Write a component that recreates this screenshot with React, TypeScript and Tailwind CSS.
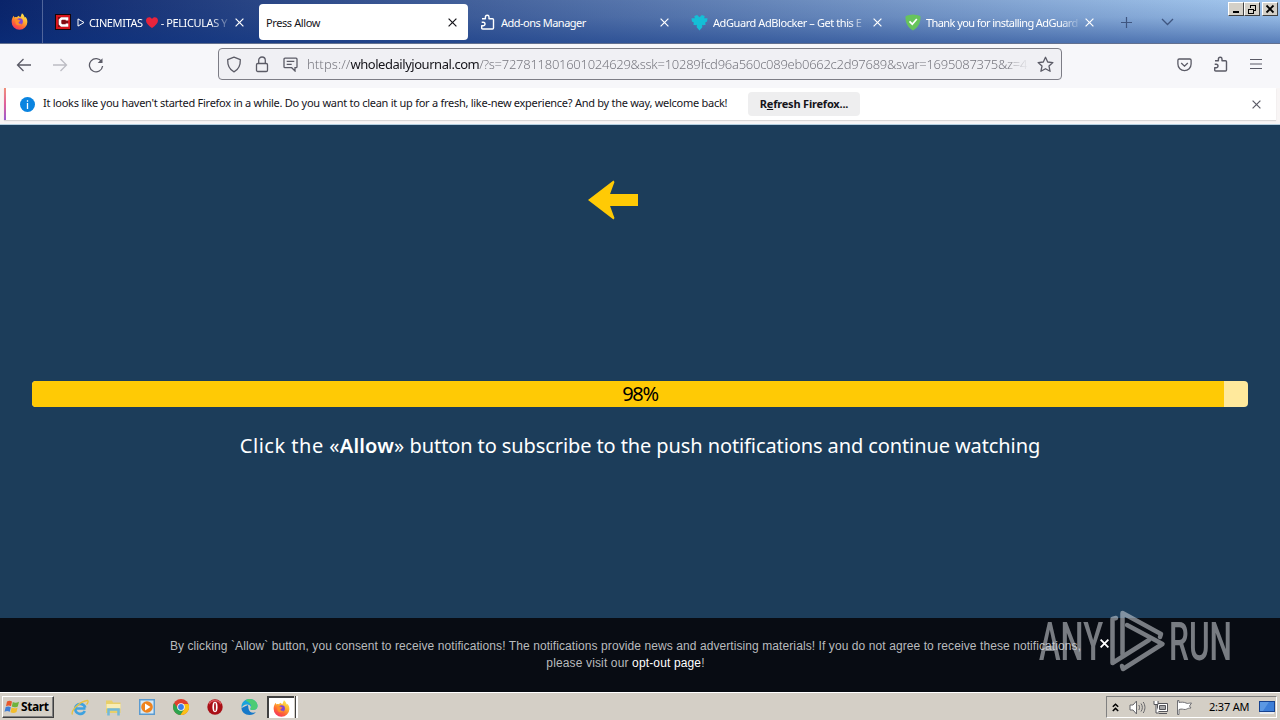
import type { ReactNode } from "react";

const uiFont = "font-['Noto_Sans','Open_Sans',sans-serif]";

function FirefoxIcon({ size }: { size: number }) {
  return (
    <svg width={size} height={size} viewBox="0 0 16 16">
      <defs>
        <linearGradient id="fox" x1=".8" y1=".1" x2=".3" y2="1">
          <stop offset="0" stopColor="#ffe14d" />
          <stop offset=".35" stopColor="#ffb02e" />
          <stop offset=".65" stopColor="#ff6a33" />
          <stop offset="1" stopColor="#f5325f" />
        </linearGradient>
      </defs>
      <path d="M8 15.800A7.400 7.400 0 0 1 .6 8.400C.6 6 1.300 4 2.600 2.600L3.200 4.200C4 3.700 5 3.800 5.600 4.100L6.800 2.600 8.800 4 10.300.2C12 1.500 12.600 3 12.900 4.200L13.800 3.700C15 5.200 15.500 7 15.400 8.600A7.400 7.400 0 0 1 8 15.800Z" fill="url(#fox)" />
      <circle cx="8.200" cy="8" r="3" fill="#7f45d6" />
      <path d="M4.400 6.200C5.500 5.400 7 5.800 7.600 6.700L9 7C8.600 8 7.600 7.800 7.200 8.600 6.900 9.800 8.400 10.500 10 10 8.500 12.200 5.500 11.800 4.500 10 3.800 8.700 3.900 7 4.400 6.200Z" fill="#ff8b2a" />
    </svg>
  );
}

function PuzzleIcon() {
  return (
    <svg width="16" height="16" viewBox="0 0 16 16" fill="none" stroke="currentColor" strokeWidth="1.400" strokeLinejoin="round">
      <path d="M2 4.700H5.400V3A1.800 1.800 0 0 1 9 3V4.700H12.500Q13.500 4.700 13.500 5.700V14Q13.500 15 12.500 15H2.700Q1.700 15 1.700 14V11.800H3.200A1.800 1.800 0 0 0 3.200 8.200H1.700" />
    </svg>
  );
}

function CloseIcon({ size = 9 }: { size?: number }) {
  return (
    <svg width={size} height={size} viewBox="0 0 9 9" stroke="currentColor" strokeWidth="1.200" className="shrink-0">
      <path d="M.6.6 8.400 8.400M8.400.6.6 8.400" />
    </svg>
  );
}

function CinemitasIcon() {
  return (
    <svg width="16" height="16" viewBox="0 0 16 16">
      <path fill="#160508" d="M0 0h16v16H0z" />
      <path fill="#d7151d" d="M1 1h14v14H1z" />
      <path fill="#160508" d="M3 3h10v10H3z" opacity=".45" />
      <path d="M12 6.500V4.500H6.500L5 6v4l1.500 1.500H12v-2" fill="none" stroke="#fff" strokeWidth="2.600" />
    </svg>
  );
}

function AdGuardFlower() {
  return (
    <svg width="18" height="17" viewBox="0 0 18 17" fill="#14bfd6">
      <path d="M3.500 1.500 6.500.5 9 3 11.500.5 14.500 1.500 14 4 17.500 4 17 7.500 15 8.500 15.500 11 13 11.500 11.800 11 12 13.500 9 17 6 13.500 6.200 11 5 11.500 2.500 11 3 8.500 1 7.500.5 4 4 4Z" />
    </svg>
  );
}

function GreenShield() {
  return (
    <svg width="16" height="17" viewBox="0 0 16 17">
      <path fill="#67c45c" d="M8 .5C10 .8 13.500 1.200 15.500 2.200 15.800 9 13 13.500 8 16.500 3 13.500.200 9 .5 2.200 2.500 1.200 6 .8 8 .5Z" />
      <path d="M4.500 7.300 7.300 10.200 11.800 5" fill="none" stroke="#fff" strokeWidth="1.700" />
    </svg>
  );
}

type TabProps = {
  icon?: ReactNode;
  title: ReactNode;
  active?: boolean;
  className: string;
  textClass: string;
};

function Tab({ icon, title, active, className, textClass }: TabProps) {
  return (
    <div className={"flex h-9 shrink-0 items-center rounded-[4px] " + className + (active ? " bg-white text-[#15141a]" : " text-white")}>
      {icon && <span className="mr-[5px] flex w-[17px] shrink-0 justify-center">{icon}</span>}
      <span className={"flex-1 overflow-hidden whitespace-nowrap pt-px text-[11px] leading-4 " + textClass}>{title}</span>
      <CloseIcon />
    </div>
  );
}

const fade = "mr-[3px] [mask-image:linear-gradient(to_right,black_86%,transparent)]";

function TabStrip() {
  return (
    <div className="flex h-11 shrink-0 items-start border-b border-[#62708f] bg-[linear-gradient(to_bottom,rgba(10,50,130,0)_0%,rgba(10,50,130,0.12)_40%,rgba(10,50,130,0.5)_100%),linear-gradient(to_right,#0a246a,#a6caf0)]">
      <div className="flex h-[43px] w-[43px] shrink-0 items-center justify-center border-r border-[#50659b] pr-[3px]">
        <FirefoxIcon size={17} />
      </div>
      <div className="flex pt-1">
        <Tab
          className="w-[211px] pl-[11px] pr-[10px]"
          textClass={fade + " tracking-[-0.4px]"}
          icon={<CinemitasIcon />}
          title={
            <span className="flex items-center">
              <svg width="8" height="9" viewBox="0 0 8 9" fill="none" stroke="white" className="ml-px mr-[4px] shrink-0"><path d="M1 .9 7 4.500 1 8.100Z" /></svg>
              CINEMITAS
              <svg width="12" height="11" viewBox="0 0 12 11" fill="#e8243c" className="mx-[3px] shrink-0"><path d="M6 11C2.500 8.500 0 6.300 0 3.500 0 0 4.500-1 6 2 7.500-1 12 0 12 3.500 12 6.300 9.500 8.500 6 11Z" /></svg>
              - PELICULAS Y
            </span>
          }
        />
        <Tab active className="ml-[5px] w-[209px] pl-[7px] pr-[11px]" textClass="tracking-[-0.4px]" title="Press Allow" />
        <Tab className="ml-[4px] w-[208px] pl-[7px] pr-[11px]" textClass="tracking-[-0.5px]" icon={<PuzzleIcon />} title="Add-ons Manager" />
        <Tab className="ml-[4px] w-[209px] pl-[7px] pr-[11px]" textClass={fade + " tracking-[-0.42px]"} icon={<AdGuardFlower />} title="AdGuard AdBlocker – Get this E" />
        <Tab className="ml-[4px] w-[208px] pl-[7px] pr-[11px]" textClass={fade + " tracking-[-0.58px]"} icon={<GreenShield />} title="Thank you for installing AdGuard" />
      </div>
      <div className="flex h-[44px] flex-1 items-center text-[#3f5680]">
        <svg width="13" height="13" viewBox="0 0 13 13" stroke="currentColor" strokeWidth="1.200" className="ml-[15px]"><path d="M6.500 1v11M1 6.500h11" /></svg>
        <svg width="13" height="8" viewBox="0 0 13 8" fill="none" stroke="currentColor" strokeWidth="1.300" className="ml-[28px]"><path d="M1 1l5.500 5.500L12 1" /></svg>
      </div>
      <div className="flex shrink-0 pr-[2px] pt-[2px]">
        {["min", "restore", "close"].map((kind) => (
          <span
            key={kind}
            className={
              "flex h-[14px] w-4 items-center justify-center border border-b-[#404040] border-l-white border-r-[#404040] border-t-white bg-[#d4d0c8]" +
              (kind === "close" ? " ml-[2px]" : "")
            }
          >
            <svg width="10" height="10" viewBox="0 0 10 10" fill="none" stroke="black" shapeRendering={kind === "close" ? "auto" : "crispEdges"}>
              {kind === "min" && <path d="M2 8h6" strokeWidth="2" />}
              {kind === "restore" && <path d="M3 1h6M3.500 1v3M8.500 1v5.500H7M1 5h6M1.500 5v4.500h5V5" />}
              {kind === "close" && <path d="M1.500 1.500l7 7M8.500 1.500l-7 7" strokeWidth="1.800" />}
            </svg>
          </span>
        ))}
      </div>
    </div>
  );
}

function Toolbar() {
  return (
    <div className="flex h-11 shrink-0 items-center bg-[#f7f7fa] pb-1 text-[#5b5b66]">
      <svg width="16" height="14" viewBox="0 0 16 14" fill="none" stroke="currentColor" strokeWidth="1.300" className="ml-4 mt-px"><path d="M15 7H1.500M7.500 1l-6 6 6 6" /></svg>
      <svg width="16" height="14" viewBox="0 0 16 14" fill="none" stroke="#bdbdc4" strokeWidth="1.300" className="ml-5 mt-px"><path d="M1 7h13.500M8.500 1l6 6-6 6" /></svg>
      <svg width="16" height="16" viewBox="0 0 16 16" fill="none" stroke="currentColor" strokeWidth="1.300" className="ml-5 mt-px"><path d="M13.700 4.800A6.600 6.600 0 1 0 14.600 9" /><path d="M14.500 1.200V6H9.700Z" fill="currentColor" stroke="none" /></svg>
      <div className="ml-[114px] flex h-8 w-[844px] items-center rounded-[4px] border border-[#7d7d86] bg-[#f0f0f4]">
        <svg width="16" height="17" viewBox="0 0 16 17" fill="none" stroke="currentColor" strokeWidth="1.300" className="ml-[7px] shrink-0"><path d="M8 1.200 14.300 3.700C14.500 9 12.500 13.500 8 15.800 3.500 13.500 1.500 9 1.700 3.700Z" strokeLinejoin="round" /></svg>
        <svg width="14" height="17" viewBox="0 0 14 17" fill="none" stroke="currentColor" strokeWidth="1.300" className="ml-[13px] shrink-0"><rect x="1.500" y="7.500" width="11" height="8" rx="1.300" /><path d="M3.700 7.500V4.300a3.300 3.300 0 0 1 6.600 0v3.200" /></svg>
        <svg width="15" height="15" viewBox="0 0 15 15" fill="none" stroke="currentColor" strokeWidth="1.300" className="ml-[14px] shrink-0"><path d="M2 1.200h11a1 1 0 0 1 1 1v7.500a1 1 0 0 1-1 1h-1V14l-3.300-3.300H2a1 1 0 0 1-1-1V2.200a1 1 0 0 1 1-1ZM3.700 4.400h7.600M3.700 7.300h5" /></svg>
        <div className="ml-[9px] w-[722px] overflow-hidden whitespace-nowrap pt-0.5 text-[13px] font-light tracking-[-0.265px] text-[#77777f] [mask-image:linear-gradient(to_right,black_97%,transparent)]">
          <span className="tracking-[0.1px]">https://</span>
          <span className="font-normal tracking-[-0.46px] text-[#15141a]">wholedailyjournal.com</span>
          /?s=727811801601024629&amp;ssk=10289fcd96a560c089eb0662c2d97689&amp;svar=1695087375&amp;z=4
        </div>
        <svg width="17" height="17" viewBox="0 0 17 17" fill="none" stroke="currentColor" strokeWidth="1.300" strokeLinejoin="round" className="ml-[8px] shrink-0"><path d="M8.500 1.300 10.700 6 15.900 6.600 12 10.100 13.100 15.300 8.500 12.700 3.900 15.300 5 10.100 1.100 6.600 6.300 6Z" /></svg>
      </div>
      <svg width="15" height="14" viewBox="0 0 15 14" fill="none" stroke="currentColor" strokeWidth="1.300" className="ml-[115px] mt-px"><path d="M2.200 1h10.600a1.300 1.300 0 0 1 1.300 1.300V6A6.600 6.600 0 0 1 .9 6V2.300A1.300 1.300 0 0 1 2.200 1ZM4.200 5l3.300 3.200L10.800 5" /></svg>
      <span className="ml-[21px]"><PuzzleIcon /></span>
      <svg width="12" height="12" viewBox="0 0 12 12" stroke="currentColor" strokeWidth="1.200" className="ml-[21px]"><path d="M0 1.500h12M0 6h12M0 10.500h12" /></svg>
    </div>
  );
}

function NotificationBar() {
  return (
    <div className="flex h-[37px] shrink-0 flex-col border-b border-[#b4cfe0] bg-[#f8f5f5] px-1">
      <div className="flex h-8 items-center bg-white pr-[15px] text-[11px] text-[#15141a] shadow-[0_1px_1px_rgba(0,0,0,0.12)]">
        <div className="h-8 w-[2px] bg-[linear-gradient(to_bottom,#f0907a,#e0609a,#9a5ad0)]" />
        <svg width="15" height="15" viewBox="0 0 15 15" className="ml-[14px]"><circle cx="7.500" cy="7.500" r="7.500" fill="#0a84e0" /><path d="M7.500 3.200v1.500M7.500 6v6" stroke="white" strokeWidth="1.300" /></svg>
        <span className="ml-2 w-[705px] whitespace-nowrap pb-px tracking-[-0.27px]">
          It looks like you haven't started Firefox in a while. Do you want to clean it up for a fresh, like-new experience? And by the way, welcome back!
        </span>
        <button className="flex h-6 w-28 items-center justify-center whitespace-nowrap rounded-[4px] bg-[#eeeeef] pt-px text-[11px] font-bold tracking-[-0.2px]">
          <span>R<u>e</u>fresh Firefox...</span>
        </button>
        <span className="ml-auto text-[#5b5b66]"><CloseIcon /></span>
      </div>
    </div>
  );
}

function Page() {
  return (
    <div className="flex min-h-0 flex-1 flex-col bg-[#1c3d5a]">
      <div className="flex h-[493px] flex-col items-center px-8 pt-[55px]">
        <svg width="50" height="40" viewBox="0 0 51 40" preserveAspectRatio="none" className="mr-[54px]"><path d="M0 20 26 .5 27 2 22.500 14H51V26H22.500L27 38 26 39.500Z" fill="#ffca05" /></svg>
        <div className="mt-[161px] grid h-[26px] w-full overflow-hidden rounded-[4px] bg-[#ffe99c]">
          <div className="col-start-1 row-start-1 bg-[#ffca05]" style={{ width: "98%" }} />
          <div className="col-start-1 row-start-1 text-center text-[20px] leading-[26px] tracking-[-1.300px] text-black">98%</div>
        </div>
        <p className="mt-[24px] whitespace-nowrap text-[20px] leading-[30px] tracking-[-0.1px] text-white">
          <span className="tracking-[0.5px]">Click the </span>
          <span className="tracking-[0.2px]">«<b className="font-semibold">Allow</b>»</span> button to subscribe to the push notifications and continue watching
        </p>
      </div>
      <div className="relative flex flex-1 justify-center bg-[#080c13] pt-[20px] font-['Liberation_Sans',Arial,sans-serif] text-[12px] leading-[17px] text-[#b9bbbe]">
        <p className="ml-[-29px] whitespace-nowrap text-center tracking-[0.085px]">
          By clicking `Allow` button, you consent to receive notifications! The notifications provide news and advertising materials! If you do not agree to receive these notifications,
          <br />
          <span className="tracking-[0.14px]">please visit our <span className="text-white">opt-out page</span>!</span>
        </p>
        <span className="absolute left-[1100px] top-[21px] text-white">
          <svg width="9" height="9" viewBox="0 0 9 9" stroke="currentColor" strokeWidth="1.800"><path d="M.6.6 8.400 8.400M8.400.6.6 8.400" /></svg>
        </span>
        <Watermark />
      </div>
    </div>
  );
}

function Watermark() {
  return (
    <svg width="196" height="64" viewBox="0 0 196 64" className="absolute left-[1038px] top-[-9px] opacity-55">
      <g fill="#d5d9dd" fontFamily="Roboto" fontSize="53" fontWeight="500">
        <text x="1" y="51" textLength="64" lengthAdjust="spacingAndGlyphs">ANY</text>
        <text x="131" y="51" textLength="63" lengthAdjust="spacingAndGlyphs">RUN</text>
      </g>
      <g fill="none" stroke="#d5d9dd" strokeWidth="4.500" strokeLinecap="round" strokeLinejoin="round">
        <path d="M78 9 74.500 10V54L111 31" />
        <path d="M84.500 45V4L123 25 122 28" />
        <path d="M89 16 124.500 35 85 60 84 57" />
      </g>
    </svg>
  );
}

function TaskbarIcons() {
  return (
    <div className="flex items-center">
      <svg width="18" height="17" viewBox="0 0 18 17" fill="none" className="ml-[17px]">
        <path d="M14.500 9.500H4.200A5.200 5.200 0 0 1 14.300 8.600M4.300 9.600A5 5 0 0 0 13.800 12" stroke="#3fa2df" strokeWidth="2.600" />
        <path d="M1.500 15.500C-.5 12.500 8 2.500 16.200 1.500 17.800 1.800 17 4 15.500 5.500" stroke="#e8c23e" strokeWidth="1.300" />
      </svg>
      <svg width="17" height="17" viewBox="0 0 17 17" className="ml-[16px]">
        <path fill="#e8cf6a" d="M1 1.500h6l1 2h7.500V14H1z" />
        <path fill="#f8edb5" d="M1.500 5h14v4.500h-14z" />
        <path d="M3.500 16.500v-6h10v6" fill="none" stroke="#72b9d9" strokeWidth="2.500" />
      </svg>
      <svg width="16" height="16" viewBox="0 0 16 16" className="ml-[17px]">
        <path fill="#5b9bd0" d="M0 0h16v16H0z" />
        <path fill="#d6e8f5" d="M1.500 1.500h13v13h-13z" />
        <circle cx="8" cy="8" r="5.800" fill="#ef831d" />
        <path fill="white" d="M6 4.500 11.500 8 6 11.500Z" />
      </svg>
      <svg width="16" height="16" viewBox="0 0 16 16" className="ml-[18px]">
        <circle cx="8" cy="8" r="8" fill="#e0402f" />
        <path fill="#2da44e" d="M1.100 4A8 8 0 0 0 7.500 16L11.500 9.800 5 9.500Z" />
        <path fill="#fbc116" d="M15.500 5A8 8 0 0 1 7.500 16L11.500 9.800 11 5Z" />
        <circle cx="8" cy="8" r="3.800" fill="white" />
        <circle cx="8" cy="8" r="2.900" fill="#3a7de8" />
      </svg>
      <svg width="16" height="16" viewBox="0 0 16 16" className="ml-[18px]">
        <circle cx="8" cy="8" r="7.700" fill="#a90f16" />
        <path d="M2 5a7 7 0 0 1 12 0" fill="none" stroke="#d9545a" strokeWidth="1.500" />
        <ellipse cx="8" cy="8" rx="2.600" ry="5.200" fill="#fff" />
        <ellipse cx="8" cy="8" rx=".9" ry="4.200" fill="#a90f16" />
      </svg>
      <svg width="17" height="16" viewBox="0 0 17 16" className="ml-[18px]">
        <path fill="#1679c9" d="M.5 9C.5 13 4 16 8.500 16c3 0 5-1 6.500-3-3 1.500-7 .5-7.500-3.500L7 6Z" />
        <path fill="#1aa3dc" d="M.5 9C0 3.500 4 0 8.500 0 13 0 16.500 3.500 16.500 7c0 3-2.500 4-5 4-1.500 0-2.500-.5-2-1.500C11 7 8 5 5 5.500 2.500 6 1 7.500.5 9Z" />
        <path fill="#4ccb73" d="M9 0c4.500 0 7.500 3.500 7.500 7 0 3-2.500 4-5 4-1.500 0-2.500-.5-2-1.500C11.500 5 7 3 4.500 1.500 6 .4 7.500 0 9 0Z" />
      </svg>
      <div className="ml-[9px] flex h-[22px] w-[27px] items-center justify-center border-l-2 border-t-2 border-[#404040] bg-white">
        <FirefoxIcon size={17} />
      </div>
      <div className="ml-[1px] h-[22px] w-[3px] border-l border-[#404040] bg-white" />
    </div>
  );
}

function Taskbar() {
  return (
    <div className="flex h-7 shrink-0 items-center border-t border-white bg-[#d4cfc6] pt-[1px] text-black">
      <div className="ml-[2px] flex h-[22px] w-[52px] items-center whitespace-nowrap border border-b-[#404040] border-l-white border-r-[#404040] border-t-white pl-[1px] shadow-[inset_-1px_-1px_0_#808080]">
        <svg width="16" height="16" viewBox="0 0 16 16" className="shrink-0">
          <path fill="#e8582b" d="M3 2.500C5 1.300 6.500 1.500 8 2.500L7 7.300C5.500 6.300 4 6.300 2 7.200Z" />
          <path fill="#6fb33c" d="M8.800 2.900C10.500 4 12.500 4 15 2.800L13.800 7.500C11.500 8.700 9.500 8.500 7.800 7.600Z" />
          <path fill="#3f7ed6" d="M1.700 8C3.500 7.200 5.200 7.200 6.800 8.200L5.800 12.800C4 11.700 2.500 11.700.5 12.700Z" />
          <path fill="#f3bd2c" d="M7.600 8.500C9.500 9.500 11.500 9.500 13.600 8.400L12.500 13C10.500 14.300 8.300 14.200 6.500 13.200Z" />
        </svg>
        <span className="ml-px text-[12px] font-bold leading-4 tracking-[-0.4px]">Start</span>
      </div>
      <TaskbarIcons />
      <div className="ml-auto mr-[3px] flex h-[22px] w-[171px] items-center border border-b-white border-l-[#808080] border-r-white border-t-[#808080]">
        <svg width="7" height="9" viewBox="0 0 7 9" fill="none" stroke="black" strokeWidth="1.500" className="ml-[5px]"><path d="M.8 3.800 3.500 1.200 6.200 3.800M.8 8 3.500 5.400 6.200 8" /></svg>
        <svg width="17" height="15" viewBox="0 0 17 15" fill="none" stroke="#66666a" className="ml-[10px]"><path fill="#fff" d="M1 5h3l3.500-4v13L4 10H1Z" /><path d="M9.800 5c1 1.500 1 3.500 0 5M12 3.500c1.800 2.500 1.800 5.500 0 8M14.200 2c2.300 3.500 2.300 7.500 0 11" /></svg>
        <svg width="16" height="15" viewBox="0 0 16 15" fill="#fff" stroke="#55555a" className="ml-[7px]"><path d="M4.500 3.500h10v8h-10Z" /><path fill="#a4a4a6" d="M6.500 5.500h6v4h-6Z" /><path d="M1 1v3.500h4V1M3 4.500V13h3M6 13.500h8" /></svg>
        <svg width="17" height="15" viewBox="0 0 17 15" fill="#fff" stroke="#707074" className="ml-[7px]"><path d="M1.500.5v14h1.500V9.500c3-1 4 0 6 0 2 0 2-1.500 6-1.500L13.500 6l2-3c-3 0-3.500 1-5.500 0-2-1-4.500-1-7-.5V.5Z" /></svg>
        <span className="ml-[16px] whitespace-nowrap text-[11px] tracking-[-0.2px]">2:37 AM</span>
        <svg width="16" height="13" viewBox="0 0 16 13" className="ml-auto mr-[1px]"><path fill="#16428f" d="M0 0h16v11H0z" /><path fill="#3c7ed8" d="M1 1h14v9H1z" /><path fill="#79b1ee" d="M1 1h9L4 10H1z" opacity=".5" /><path fill="#e7ebf0" d="M1 11h14v2H1z" /></svg>
      </div>
    </div>
  );
}

export default function App() {
  return (
    <div className={"flex h-[720px] w-[1280px] flex-col overflow-hidden " + uiFont}>
      <TabStrip />
      <Toolbar />
      <NotificationBar />
      <Page />
      <Taskbar />
    </div>
  );
}
